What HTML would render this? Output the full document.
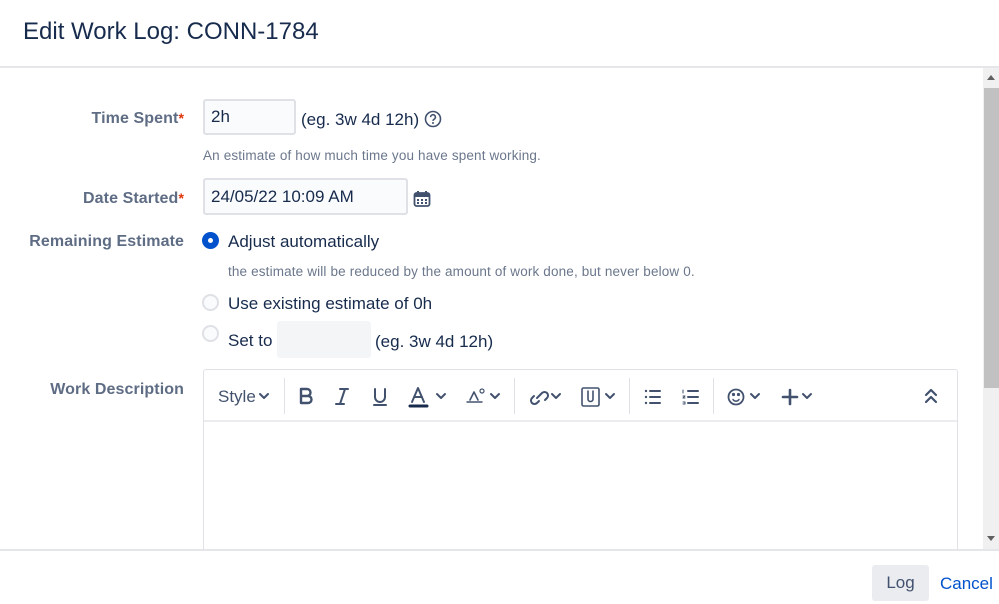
<!DOCTYPE html>
<html><head><style>
*{box-sizing:border-box;margin:0;padding:0}
body{width:999px;height:604px;overflow:hidden;background:#fff;font-family:"Liberation Sans",sans-serif;color:#172b4d;position:relative}
.abs{position:absolute}
.lbl{position:absolute;right:815px;font-size:16px;font-weight:bold;color:#5e6c84;white-space:nowrap;letter-spacing:0.1px}
.req{color:#de350b;font-size:14px;vertical-align:top}
.inp{position:absolute;background:#fafbfc;border:2px solid #dfe1e6;border-radius:3px;font-size:17px;padding-left:6px;display:flex;align-items:center}
.t{position:absolute;font-size:17px;color:#172b4d;white-space:nowrap}
.s{position:absolute;font-size:13.5px;color:#6b778c;white-space:nowrap;letter-spacing:0.15px}
.radio{position:absolute;width:17px;height:17px;border-radius:50%;border:2px solid #dfe1e6;background:#fafbfc}
.sep{position:absolute;top:378px;width:1px;height:36px;background:#dfe1e6}
svg.i{position:absolute}
</style></head><body>
<div class="abs" style="left:23px;top:18px;font-size:24px;color:#172b4d">Edit Work Log: CONN-1784</div>
<div class="abs" style="left:0;top:66px;width:999px;height:2px;background:#e4e6ea"></div>
<div class="abs" style="left:983px;top:68px;width:16px;height:482px;background:#f0f0f0"></div>
<div class="abs" style="left:984px;top:88px;width:15px;height:300px;background:#c1c1c1"></div>
<div class="abs" style="left:987px;top:75px;border:4px solid transparent;border-bottom:5px solid #606060;border-top:0"></div>
<div class="abs" style="left:987px;top:536px;border:4px solid transparent;border-top:5px solid #606060;border-bottom:0"></div>

<div class="lbl" style="top:110px">Time Spent<span class="req">*</span></div>
<div class="inp" style="left:203px;top:99px;width:93px;height:36px">2h</div>
<div class="t" style="left:301px;top:110px">(eg. 3w 4d 12h)</div>
<svg class="i" style="left:424px;top:110px" width="18" height="18" viewBox="0 0 18 18"><circle cx="9" cy="9" r="7.5" fill="none" stroke="#42526e" stroke-width="1.6"/><path d="M6.6 7.2a2.4 2.4 0 1 1 3.4 2.1c-.7.4-1 .8-1 1.6" fill="none" stroke="#42526e" stroke-width="1.6"/><circle cx="9" cy="13" r="1" fill="#42526e"/></svg>
<div class="s" style="left:203px;top:148px">An estimate of how much time you have spent working.</div>

<div class="lbl" style="top:190px">Date Started<span class="req">*</span></div>
<div class="inp" style="left:203px;top:178px;width:205px;height:37px">24/05/22 10:09 AM</div>
<svg class="i" style="left:413px;top:190px" width="18" height="18" viewBox="0 0 18 18"><rect x="1.5" y="3" width="15" height="13" rx="2" fill="none" stroke="#42526e" stroke-width="1.8"/><rect x="1.5" y="3" width="15" height="4" fill="#42526e"/><rect x="4" y="1" width="2" height="3" fill="#42526e"/><rect x="12" y="1" width="2" height="3" fill="#42526e"/><g fill="#42526e"><rect x="4" y="9" width="2" height="2"/><rect x="8" y="9" width="2" height="2"/><rect x="12" y="9" width="2" height="2"/><rect x="4" y="12" width="2" height="2"/><rect x="8" y="12" width="2" height="2"/><rect x="12" y="12" width="2" height="2"/></g></svg>

<div class="lbl" style="top:233px">Remaining Estimate</div>
<div class="radio" style="left:202px;top:232px;border:none;background:#0052cc"><div style="position:absolute;left:6px;top:6px;width:5px;height:5px;border-radius:50%;background:#fff"></div></div>
<div class="t" style="left:228px;top:232px">Adjust automatically</div>
<div class="s" style="left:228px;top:264px">the estimate will be reduced by the amount of work done, but never below 0.</div>
<div class="radio" style="left:202px;top:294px"></div>
<div class="t" style="left:228px;top:294px">Use existing estimate of 0h</div>
<div class="radio" style="left:202px;top:325px"></div>
<div class="t" style="left:228px;top:331px">Set to</div>
<div class="abs" style="left:277px;top:321px;width:94px;height:37px;background:#f4f5f7;border-radius:3px"></div>
<div class="t" style="left:375px;top:332px">(eg. 3w 4d 12h)</div>

<div class="lbl" style="top:381px">Work Description</div>
<div class="abs" style="left:203px;top:369px;width:755px;height:200px;border:1px solid #dfe1e6;border-radius:3px"></div>
<div class="abs" style="left:204px;top:420px;width:753px;height:2px;background:#ebecf0"></div>

<div class="abs" style="left:218px;top:387px;font-size:17px;color:#42526e">Style</div>
<svg class="i" style="left:0;top:0" width="999" height="604" viewBox="0 0 999 604" fill="none" stroke="#42526e" stroke-width="2" stroke-linecap="round" stroke-linejoin="round">
<path d="M260 394l4 4 4-4"/>
<!-- B -->
<path d="M301 389h6a3.5 3.5 0 0 1 0 7h-6zM301 396h7a3.5 3.5 0 0 1 0 7h-7z" stroke-width="2.4"/>
<!-- I -->
<path d="M340 389h8M336 404h8M345 389l-5 15"/>
<!-- U -->
<path d="M375 389v8a5 5 0 0 0 10 0v-8M374 405h12"/>
<!-- A -->
<path d="M412 402l6-14 6 14M414 397h8"/>
<path d="M410 406h17" stroke="#172b4d" stroke-width="3"/>
<path d="M437 394l4 4 4-4"/>
<!-- A clear -->
<path d="M470 400l4-8 4 8" stroke-width="1.6"/><path d="M467 402h15" stroke-width="1.4"/><circle cx="482" cy="391" r="2" stroke-width="1.2"/>
<path d="M491 394l4 4 4-4"/>
<!-- link -->
<path d="M537 398l5-5M534 396l-2 2a3.5 3.5 0 0 0 5 5l2-2M545 400l2-2a3.5 3.5 0 0 0-5-5l-2 2"/>
<path d="M552 394l4 4 4-4"/>
<!-- attach -->
<rect x="582" y="388" width="17" height="18" rx="1.5" stroke-width="1.6"/><path d="M588 391v8a2.5 2.5 0 0 0 5 0v-8" stroke-width="1.6"/>
<path d="M606 394l4 4 4-4"/>
<!-- bullet -->
<path d="M650 391h10M650 397h10M650 403h10" stroke-width="2"/><path d="M646 391h0M646 397h0M646 403h0" stroke-width="2.4"/>
<!-- numbered -->
<path d="M688 391h10M688 397h10M688 403h10" stroke-width="2"/><path d="M683 390v3M683 396h2l-2 2h2M683 402h2v2h-2" stroke-width="1"/>
<!-- smile -->
<circle cx="736" cy="397" r="7.5" stroke-width="1.8"/><path d="M733 399.5a3.5 3.5 0 0 0 6 0" stroke-width="1.5"/><circle cx="733.5" cy="394.5" r="0.6" fill="#42526e"/><circle cx="738.5" cy="394.5" r="0.6" fill="#42526e"/>
<path d="M751 394l4 4 4-4"/>
<!-- plus -->
<path d="M790 390v14M783 397h14" stroke-width="2.6"/>
<path d="M803 394l4 4 4-4"/>
<!-- collapse -->
<path d="M926 395l5-5 5 5M926 402l5-5 5 5" stroke-width="2.2"/>
</svg>
<div class="sep" style="left:284px"></div>
<div class="sep" style="left:514px"></div>
<div class="sep" style="left:629px"></div>
<div class="sep" style="left:713px"></div>

<div class="abs" style="left:0;top:549px;width:999px;height:55px;background:#fff;border-top:2px solid #e4e6ea"></div>
<div class="abs" style="left:872px;top:565px;width:57px;height:36px;background:#ebecf0;border-radius:3px;font-size:17px;color:#42526e;display:flex;align-items:center;justify-content:center">Log</div>
<div class="t" style="left:940px;top:574px;color:#0052cc">Cancel</div>
</body></html>
